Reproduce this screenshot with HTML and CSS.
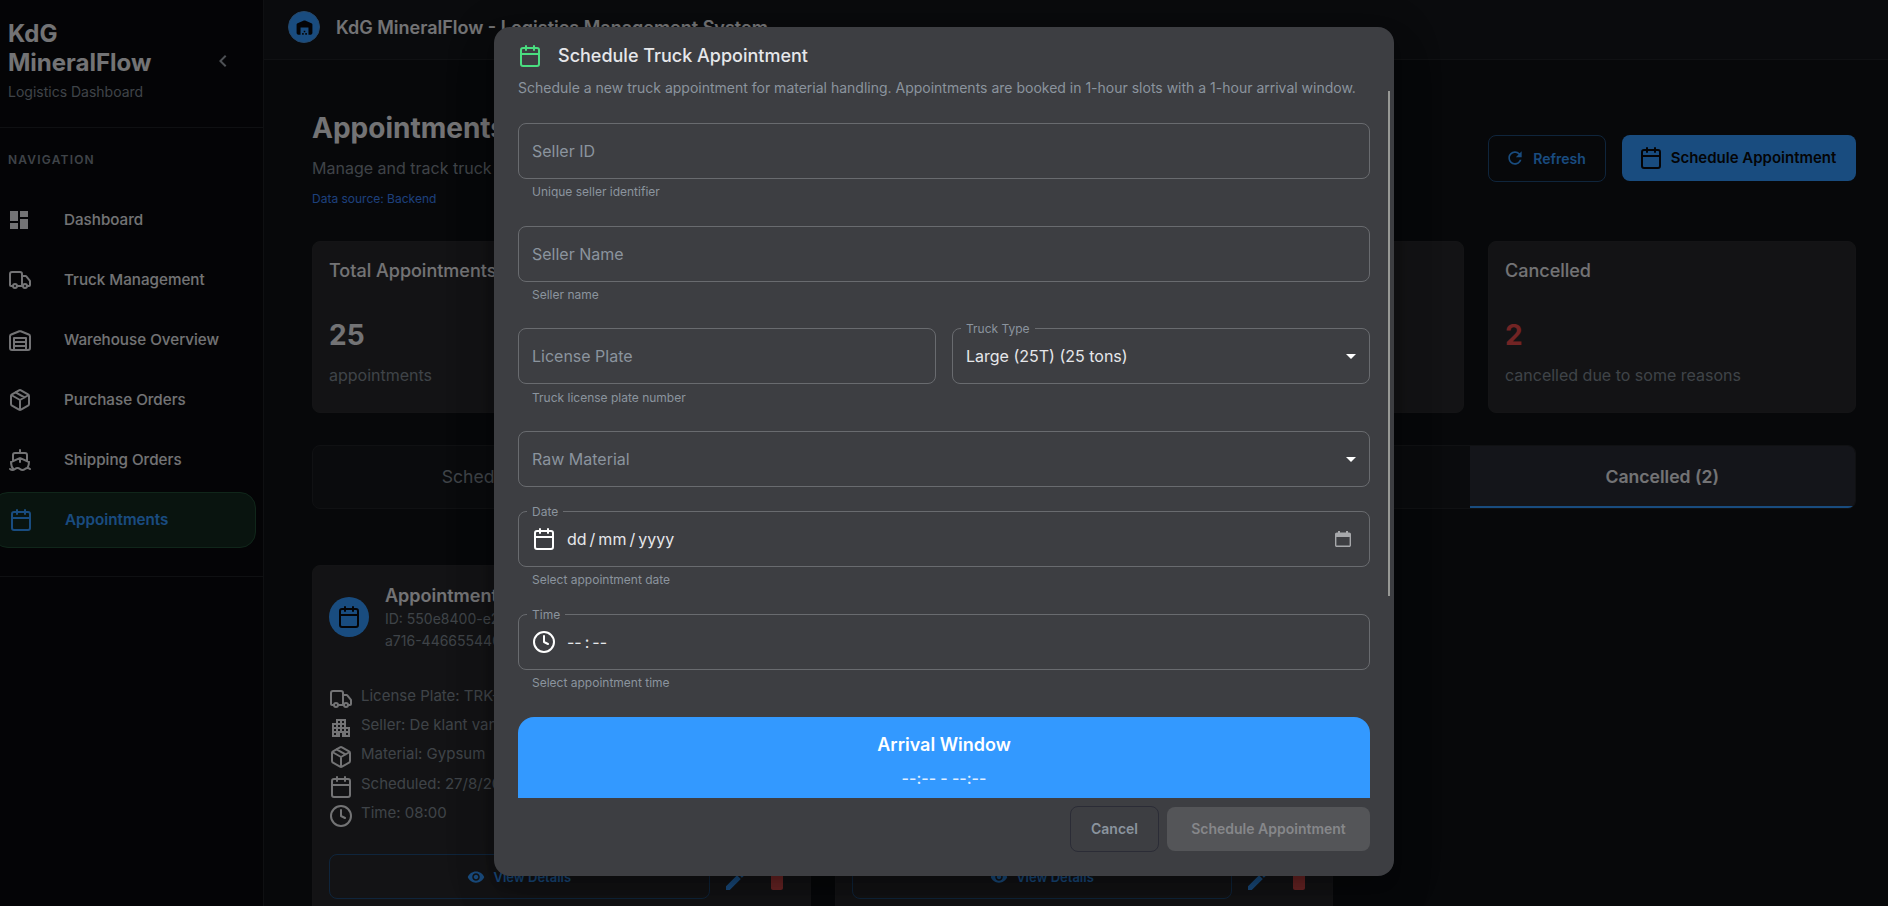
FILE: index.html
```html
<!DOCTYPE html>
<html lang="en">
<head>
<meta charset="utf-8">
<title>KdG MineralFlow</title>
<link rel="stylesheet" href="styles.css">
</head>
<body>
<svg class="sprite" aria-hidden="true">
  <symbol id="calendar" viewBox="0 0 24 24"><rect x="3" y="4" width="18" height="18" rx="2"/><path d="M16 2v4M8 2v4M3 10h18"/></symbol>
  <symbol id="truck" viewBox="0 0 24 24"><path d="M14 18V6a2 2 0 0 0-2-2H4a2 2 0 0 0-2 2v11a1 1 0 0 0 1 1h2M15 18H9M19 18h2a1 1 0 0 0 1-1v-3.65a1 1 0 0 0-.22-.624l-3.48-4.35A1 1 0 0 0 17.52 8H14"/><circle cx="17" cy="18" r="2"/><circle cx="7" cy="18" r="2"/></symbol>
  <symbol id="warehouse" viewBox="0 0 24 24"><path d="M22 8.35V20a2 2 0 0 1-2 2H4a2 2 0 0 1-2-2V8.35A2 2 0 0 1 3.26 6.5l8-3.2a2 2 0 0 1 1.48 0l8 3.2A2 2 0 0 1 22 8.35ZM6 18h12M6 14h12"/><rect x="6" y="10" width="12" height="12"/></symbol>
  <symbol id="package" viewBox="0 0 24 24"><path d="M11 21.73a2 2 0 0 0 2 0l7-4A2 2 0 0 0 21 16V8a2 2 0 0 0-1-1.73l-7-4a2 2 0 0 0-2 0l-7 4A2 2 0 0 0 3 8v8a2 2 0 0 0 1 1.73zM12 22V12M3.3 7l8.7 5 8.7-5M7.5 4.27l9 5.15"/></symbol>
  <symbol id="ship" viewBox="0 0 24 24"><path d="M12 10.189V14M12 2v3M19 13V7a2 2 0 0 0-2-2H7a2 2 0 0 0-2 2v6M19.38 20A11.6 11.6 0 0 0 21 14l-8.188-3.639a2 2 0 0 0-1.624 0L3 14a11.6 11.6 0 0 0 2.81 7.76M2 21c.6.5 1.2 1 2.5 1 2.5 0 2.5-2 5-2 1.3 0 1.9.5 2.5 1s1.2 1 2.5 1c2.5 0 2.5-2 5-2 1.3 0 1.9.5 2.5 1"/></symbol>
  <symbol id="clock" viewBox="0 0 24 24"><circle cx="12" cy="12" r="10"/><path d="M12 6v6l4 2"/></symbol>
  <symbol id="dashboard" viewBox="0 0 24 24"><path d="M3 13h8V3H3v10zm0 8h8v-6H3v6zm10 0h8V11h-8v10zm0-18v6h8V3h-8z"/></symbol>
  <symbol id="depot" viewBox="0 0 24 24"><path d="M22 19V8.35c0-.82-.5-1.55-1.26-1.86l-8-3.2c-.48-.19-1.01-.19-1.49 0l-8 3.2C2.5 6.8 2 7.54 2 8.35V19c0 1.1.9 2 2 2h3v-9h10v9h3c1.1 0 2-.9 2-2zm-11 0H9v2h2v-2zm2-3h-2v2h2v-2zm2 3h-2v2h2v-2z"/></symbol>
  <symbol id="apartment" viewBox="0 0 24 24"><path d="M17 11V3H7v4H3v14h8v-4h2v4h8V11h-4zM7 19H5v-2h2v2zm0-4H5v-2h2v2zm0-4H5V9h2v2zm4 4H9v-2h2v2zm0-4H9V9h2v2zm0-4H9V5h2v2zm4 8h-2v-2h2v2zm0-4h-2V9h2v2zm0-4h-2V5h2v2zm4 12h-2v-2h2v2zm0-4h-2v-2h2v2z"/></symbol>
  <symbol id="eye" viewBox="0 0 24 24"><path d="M12 4.5C7 4.5 2.73 7.61 1 12c1.73 4.39 6 7.5 11 7.5s9.27-3.11 11-7.5c-1.73-4.39-6-7.5-11-7.5zM12 17c-2.76 0-5-2.24-5-5s2.24-5 5-5 5 2.24 5 5-2.24 5-5 5zm0-8c-1.66 0-3 1.34-3 3s1.34 3 3 3 3-1.34 3-3-1.34-3-3-3z"/></symbol>
  <symbol id="edit" viewBox="0 0 24 24"><path d="M3 17.25V21h3.75L17.81 9.94l-3.75-3.75L3 17.25zM20.71 7.04c.39-.39.39-1.02 0-1.41l-2.34-2.34a1 1 0 0 0-1.41 0l-1.83 1.83 3.75 3.75 1.83-1.83z"/></symbol>
  <symbol id="trash" viewBox="0 0 24 24"><path d="M6 19c0 1.1.9 2 2 2h8c1.1 0 2-.9 2-2V7H6v12zM19 4h-3.5l-1-1h-5l-1 1H5v2h14V4z"/></symbol>
  <symbol id="refresh" viewBox="0 0 24 24"><path d="M17.65 6.35C16.2 4.9 14.21 4 12 4c-4.42 0-7.99 3.58-7.99 8s3.57 8 7.99 8c3.73 0 6.84-2.55 7.73-6h-2.08c-.82 2.33-3.04 4-5.65 4-3.31 0-6-2.69-6-6s2.69-6 6-6c1.66 0 3.14.69 4.22 1.78L13 11h7V4l-2.35 2.35z"/></symbol>
  <symbol id="chevron" viewBox="0 0 24 24"><path d="M15.41 7.41 14 6l-6 6 6 6 1.41-1.41L10.83 12z"/></symbol>
  <symbol id="caret" viewBox="0 0 24 24"><path d="m7 10 5 5 5-5z"/></symbol>
  <symbol id="picker" viewBox="0 0 16 16"><path fill-rule="evenodd" d="M3 0h2v1.5h6V0h2v1.5h1.2c1 0 1.8.8 1.8 1.8v10.9c0 1-.8 1.8-1.8 1.8H1.8C.8 16 0 15.200 0 14.200V3.300c0-1 .8-1.800 1.800-1.800H3zM1.400 6v8.600h13.200V6z"/></symbol>
</svg>

<div class="app">
  <aside class="sidebar">
    <div class="brand">
      <div>
        <div class="brand-name">KdG MineralFlow</div>
        <div class="brand-sub">Logistics Dashboard</div>
      </div>
      <svg class="fill collapse"><use href="#chevron"/></svg>
    </div>
    <div class="nav-label">NAVIGATION</div>
    <nav class="nav">
      <a class="nav-item"><svg class="fill icon dash"><use href="#dashboard"/></svg>Dashboard</a>
      <a class="nav-item"><svg class="line icon"><use href="#truck"/></svg>Truck Management</a>
      <a class="nav-item"><svg class="line icon"><use href="#warehouse"/></svg>Warehouse Overview</a>
      <a class="nav-item"><svg class="line icon"><use href="#package"/></svg>Purchase Orders</a>
      <a class="nav-item"><svg class="line icon"><use href="#ship"/></svg>Shipping Orders</a>
      <a class="nav-item active"><svg class="line icon"><use href="#calendar"/></svg>Appointments</a>
    </nav>
  </aside>

  <div class="main">
    <header class="topbar">
      <span class="logo"><svg class="fill"><use href="#depot"/></svg></span>
      <span class="topbar-title">KdG MineralFlow - Logistics Management System</span>
    </header>
    <main class="content">
      <div class="page-head">
        <div>
          <h1>Appointments</h1>
          <p class="lead">Manage and track truck appointments</p>
          <p class="source">Data source: Backend</p>
        </div>
        <div class="page-actions">
          <button class="btn outline"><svg class="fill"><use href="#refresh"/></svg>Refresh</button>
          <button class="btn primary"><svg class="line icon"><use href="#calendar"/></svg>Schedule Appointment</button>
        </div>
      </div>

      <div class="stats">
        <div class="stat"><h2>Total Appointments</h2><strong>25</strong><span>appointments</span></div>
        <div class="stat"></div>
        <div class="stat"></div>
        <div class="stat"><h2>Cancelled</h2><strong class="red">2</strong><span>cancelled due to some reasons</span></div>
      </div>

      <div class="tabs">
        <div class="tab">Scheduled (20)</div>
        <div class="tab"></div>
        <div class="tab"></div>
        <div class="tab selected">Cancelled (2)</div>
      </div>

      <div class="cards">
        <article class="card">
          <div class="card-head">
            <span class="badge"><svg class="line icon"><use href="#calendar"/></svg></span>
            <div class="card-id"><h3>Appointment</h3><p>ID: 550e8400-e29b<br>a716-446655440000</p></div>
          </div>
          <ul class="facts">
            <li><svg class="line icon"><use href="#truck"/></svg>License Plate: TRK-001</li>
            <li><svg class="fill icon"><use href="#apartment"/></svg>Seller: De klant van</li>
            <li><svg class="line icon"><use href="#package"/></svg>Material: Gypsum</li>
            <li><svg class="line icon"><use href="#calendar"/></svg>Scheduled: 27/8/2025</li>
            <li><svg class="line icon"><use href="#clock"/></svg>Time: 08:00</li>
          </ul>
          <div class="card-actions">
            <button class="btn view"><svg class="fill"><use href="#eye"/></svg>View Details</button>
            <svg class="fill icon edit"><use href="#edit"/></svg>
            <svg class="fill icon trash"><use href="#trash"/></svg>
          </div>
        </article>
        <article class="card">
          <div class="card-head"></div>
          <ul class="facts"></ul>
          <div class="card-actions">
            <button class="btn view"><svg class="fill"><use href="#eye"/></svg>View Details</button>
            <svg class="fill icon edit"><use href="#edit"/></svg>
            <svg class="fill icon trash"><use href="#trash"/></svg>
          </div>
        </article>
      </div>
    </main>
  </div>
</div>

<div class="backdrop">
  <section class="dialog" role="dialog">
    <div class="dialog-title"><svg class="line icon"><use href="#calendar"/></svg>Schedule Truck Appointment</div>
    <p class="dialog-desc">Schedule a new truck appointment for material handling. Appointments are booked in 1-hour slots with a 1-hour arrival window.</p>
    <div class="form">
      <div class="field-group tall">
        <div class="field">Seller ID</div>
        <div class="helper">Unique seller identifier</div>
      </div>
      <div class="field-group tall seller-name">
        <div class="field">Seller Name</div>
        <div class="helper">Seller name</div>
      </div>
      <div class="field-row tall">
        <div class="field-group">
          <div class="field">License Plate</div>
          <div class="helper plate-helper">Truck license plate number</div>
        </div>
        <div class="field-group">
          <div class="field filled"><span class="float">Truck Type</span>Large (25T) (25 tons)<svg class="fill icon caret"><use href="#caret"/></svg></div>
        </div>
      </div>
      <div class="field-group short">
        <div class="field">Raw Material<svg class="fill icon caret"><use href="#caret"/></svg></div>
      </div>
      <div class="field-group tall">
        <div class="field filled"><span class="float">Date</span><svg class="line icon lead-icon"><use href="#calendar"/></svg><span class="parts"><i>dd</i><i>/</i><i>mm</i><i>/</i><i>yyyy</i></span><svg class="fill picker"><use href="#picker"/></svg></div>
        <div class="helper">Select appointment date</div>
      </div>
      <div class="field-group tall">
        <div class="field filled"><span class="float">Time</span><svg class="line icon lead-icon"><use href="#clock"/></svg><span class="parts"><i>--</i><i>:</i><i>--</i></span></div>
        <div class="helper">Select appointment time</div>
      </div>
      <div class="arrival">
        <div class="arrival-title">Arrival Window</div>
        <div class="arrival-time">--:-- - --:--</div>
      </div>
    </div>
    <div class="dialog-actions">
      <button class="btn cancel">Cancel</button>
      <button class="btn disabled">Schedule Appointment</button>
    </div>
    <span class="scroll-thumb"></span>
  </section>
</div>
</body>
</html>
```
FILE: styles.css
```css
* { box-sizing: border-box; }
html, body { height: 100%; }
body {
  margin: 0;
  overflow: hidden;
  background: #0e1014;
  color: #e6e7ea;
  font-family: Inter, "Liberation Sans", sans-serif;
  font-size: 16px;
}
h1, h2, h3, p, ul { margin: 0; padding: 0; }
i { font-style: normal; }
.sprite { position: absolute; width: 0; height: 0; }
svg { display: block; flex: none; }
.icon { width: 24px; height: 24px; }
.line { fill: none; stroke: currentColor; stroke-width: 2; stroke-linecap: round; stroke-linejoin: round; }
.fill { fill: currentColor; }

.app { display: flex; height: 906px; overflow: hidden; }

/* Sidebar */
.sidebar { width: 264px; flex: none; background: #08090c; border-right: 1px solid #1f2124; overflow: hidden; }
.brand { display: flex; height: 128px; padding: 19px 28px 0 8px; border-bottom: 1px solid #1f2124; justify-content: space-between; }
.brand-name { width: 160px; font-size: 24px; line-height: 29px; font-weight: 700; }
.brand-sub { margin-top: 4px; font-size: 14px; line-height: 21px; color: #7f8791; }
.collapse { width: 24px; height: 24px; margin-top: 30px; color: #9aa0a8; }
.nav-label { padding: 23px 8px 0; font-size: 12px; line-height: 18px; font-weight: 600; letter-spacing: 1.2px; color: #7f8791; }
.nav { display: flex; flex-direction: column; gap: 4px; margin-top: 23px; padding-bottom: 28px; border-bottom: 1px solid #1f2124; }
.nav-item { display: flex; align-items: center; gap: 32px; width: 264px; height: 56px; margin-left: -8px; padding: 0 0 1px 16px; font-size: 15.2px; font-weight: 500; border-radius: 16px; }
.dash { margin: 0 1px 0 -1px; }
.nav-item.active { border: 1px solid #204d34; background: #13281f; color: #3399ff; font-weight: 600; }

/* Top bar */
.main { flex: 1; min-width: 0; }
.topbar { display: flex; align-items: center; gap: 16px; height: 60px; padding: 0 24px 5px; background: #14161a; border-bottom: 1px solid #202226; }
.logo { display: grid; place-items: center; width: 32px; height: 32px; border-radius: 50%; border: 1px solid #4a8fd4; background: #3399ff; color: #08090c; }
.logo svg { width: 19px; height: 19px; }
.topbar-title { font-size: 18px; font-weight: 600; }

.content { padding: 48px 32px 0 48px; }
.page-head { display: flex; justify-content: space-between; height: 133px; }
h1 { font-size: 28px; line-height: 34px; font-weight: 700; padding-top: 3px; }
.lead { margin-top: 11px; font-size: 16px; line-height: 24px; color: #7f8791; }
.source { margin-top: 10px; font-size: 12px; line-height: 18px; color: #3b82f6; }
.page-actions { display: flex; align-items: flex-start; gap: 16px; padding-top: 27px; }
.btn { display: flex; align-items: center; justify-content: center; margin: 0; padding: 0; border: 0; border-radius: 8px; background: none; font: 600 14px/20px Inter, sans-serif; color: #3399ff; }
.btn.outline { width: 118px; height: 47px; gap: 8px; padding-right: 3px; border: 1px solid #1f4a78; }
.btn.outline svg { width: 20px; height: 20px; margin-bottom: 2px; }
.btn.primary { width: 234px; height: 46px; gap: 8px; padding-right: 3px; background: #3399ff; color: #08090c; font-size: 15px; }

.stats { display: grid; grid-template-columns: repeat(4, 1fr); gap: 24px; }
.stat { display: flex; flex-direction: column; height: 172px; padding: 16px; border: 1px solid #28292c; background: #26272a; border-radius: 8px; }
.stat h2 { font-size: 18px; line-height: 26px; font-weight: 500; }
.stat strong { margin-top: 33px; font-size: 28px; line-height: 36px; font-weight: 700; }
.stat span { margin-top: 10px; font-size: 16px; line-height: 24px; color: #7f8791; }
.stat .red { color: #e54848; }

.tabs { display: grid; grid-template-columns: repeat(4, 1fr); height: 64px; margin-top: 32px; border: 1px solid #202226; border-radius: 8px; background: #14161a; overflow: hidden; }
.tab { display: grid; place-items: center; padding-bottom: 2px; font-size: 17.6px; color: #7f8791; }
.tab.selected { padding-bottom: 0; color: #e6e7ea; font-weight: 600; background: #282a34; border-bottom: 2px solid #3399ff; }

.cards { display: grid; grid-template-columns: repeat(3, 1fr); gap: 24px; margin-top: 56px; }
.card { height: 360px; padding: 16px; border: 1px solid #28292c; border-radius: 8px; background: #26272a; }
.card-head { display: flex; align-items: center; gap: 16px; height: 70px; }
.badge { display: grid; place-items: center; width: 40px; height: 40px; border-radius: 50%; background: #3399ff; color: #08090c; }
.card h3 { font-size: 18px; line-height: 25px; font-weight: 600; }
.card-id p { font-size: 14px; line-height: 22px; color: #7f8791; }
.facts { list-style: none; height: 147px; margin-top: 30px; }
.facts li { display: flex; align-items: center; gap: 8px; height: 29.2px; font-size: 15px; line-height: 23px; color: #7f8791; padding-bottom: 2px; }
.facts svg { color: #e6e7ea; margin-top: 7px; }
.card-actions { display: flex; height: 45px; margin-top: 25px; }
.btn.view { flex: 1; border: 1px solid #1f4a78; gap: 8px; font-size: 13px; }
.btn.view svg { width: 18px; height: 18px; }
.edit { margin: 15px 0 0 13px; color: #3399ff; }
.trash { margin: 15px 5px 0 18px; color: #d94a4a; }

/* Dialog */
.backdrop { position: absolute; inset: 0; display: flex; justify-content: center; align-items: flex-start; padding-top: 27px; background: rgba(0, 0, 0, .5); }
.dialog { position: relative; width: 900px; height: 849px; padding: 0 24px; border-radius: 16px; background: #3d3e42; box-shadow: 0 11px 15px -7px rgba(0, 0, 0, .2), 0 24px 38px 3px rgba(0, 0, 0, .14), 0 9px 46px 8px rgba(0, 0, 0, .12); }
.dialog-title { display: flex; align-items: center; gap: 16px; padding-top: 15px; height: 42px; font-size: 18px; font-weight: 500; color: #e6e7ea; }
.dialog-title svg { color: #4ade80; margin-top: 1px; }
.dialog-desc { margin-top: 8px; font-size: 14px; line-height: 21px; color: #8b949e; white-space: nowrap; }
.form { height: 700px; padding-top: 25px; overflow: hidden; }
.tall { height: 103px; }
.seller-name { height: 102px; }
.short { height: 80px; }
.field-row { display: grid; grid-template-columns: 1fr 1fr; gap: 16px; }
.field { position: relative; display: flex; align-items: center; height: 56px; padding: 0 13px; border: 1px solid #696b6f; border-radius: 8px; color: #8b949e; }
.field.filled { color: #e6e7ea; }
.float { position: absolute; left: 8px; top: -9px; padding: 0 5px; background: #3d3e42; color: #8b949e; font-size: 12px; line-height: 17px; }
.caret { margin-left: auto; margin-right: -7px; color: #fff; }
.helper { margin: 4px 14px 0; font-size: 12px; line-height: 18px; color: #8b949e; }
.plate-helper { margin-top: 5px; }
.lead-icon { color: #fff; margin-right: 11px; }
.parts { display: flex; gap: 3px; }
.picker { width: 16px; height: 16px; margin-left: auto; margin-right: 5px; color: #a6a7aa; }
.arrival { display: flex; flex-direction: column; align-items: center; height: 110px; padding-top: 14px; border-radius: 16px; background: #3399ff; color: #fff; }
.arrival-title { font-size: 18px; line-height: 28px; font-weight: 600; }
.arrival-time { margin-top: 7px; font-size: 16px; line-height: 24px; font-weight: 500; color: #e2efff; }
.dialog-actions { display: flex; align-items: center; justify-content: flex-end; gap: 8px; padding-top: 8px; }
.btn.cancel { width: 89px; height: 46px; border: 1px solid #2b2c36; color: #8b949e; }
.btn.disabled { width: 203px; height: 44px; background: #545558; color: #86878a; }
.scroll-thumb { position: absolute; right: 4px; top: 64px; width: 2px; height: 505px; background: #979895; }
```
